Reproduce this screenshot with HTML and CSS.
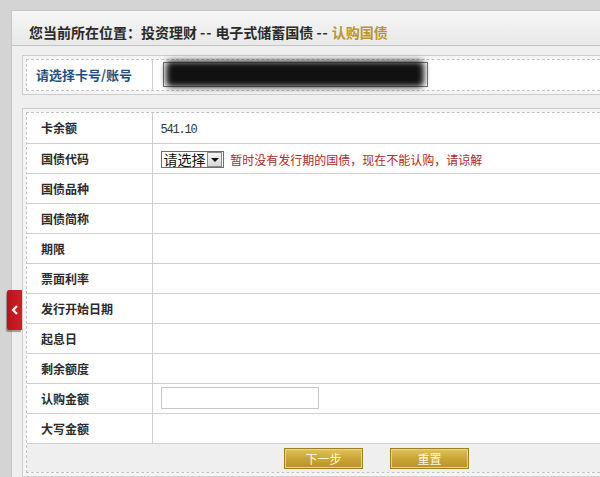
FILE: index.html
```html
<!DOCTYPE html>
<html lang="zh-CN">
<head>
    <meta charset="UTF-8">
    <title>认购国债</title>
    <link rel="stylesheet" href="styles.css">
</head>
<body>
    <div class="page">
        <div class="panel">
            <div class="crumb">
                您当前所在位置：<span class="crumb-item">投资理财</span><span class="sep">--</span>电子式储蓄国债<span class="sep">--</span><span class="current">认购国债</span>
            </div>

            <div class="content">
                <!-- card select -->
                <div class="box">
                    <div class="box-inner card-row">
                        <div class="card-label">请选择卡号/账号</div>
                        <div class="card-value">
                            <div class="account-select">
                                <div class="mask"></div>
                            </div>
                        </div>
                    </div>
                </div>

                <!-- bond form -->
                <div class="box form-box">
                    <div class="box-inner">
                        <table class="form-table">
                            <tr><td class="label">卡余额</td><td class="value"><span class="amount">541.10</span></td></tr>
                            <tr>
                                <td class="label">国债代码</td>
                                <td class="value">
                                    <span class="fake-select"><span class="fake-text">请选择</span><span class="fake-arrow"></span></span>
                                    <span class="notice">暂时没有发行期的国债，现在不能认购，请谅解</span>
                                </td>
                            </tr>
                            <tr><td class="label">国债品种</td><td class="value"></td></tr>
                            <tr><td class="label">国债简称</td><td class="value"></td></tr>
                            <tr><td class="label">期限</td><td class="value"></td></tr>
                            <tr><td class="label">票面利率</td><td class="value"></td></tr>
                            <tr><td class="label">发行开始日期</td><td class="value"></td></tr>
                            <tr><td class="label">起息日</td><td class="value"></td></tr>
                            <tr><td class="label">剩余额度</td><td class="value"></td></tr>
                            <tr><td class="label">认购金额</td><td class="value"><input type="text" class="amount-input"></td></tr>
                            <tr><td class="label">大写金额</td><td class="value"></td></tr>
                        </table>
                        <div class="button-bar">
                            <button class="btn">下一步</button>
                            <button class="btn">重置</button>
                        </div>
                    </div>
                </div>
            </div>
        </div>

        <!-- side toggle tab -->
        <div class="side-tab">
            <svg width="8" height="10" viewBox="0 0 8 10"><path d="M6 1 L2 5 L6 9" fill="none" stroke="#fff" stroke-width="2.2"/></svg>
        </div>
    </div>
</body>
</html>
```

FILE: styles.css
```css
* {
    margin: 0;
    padding: 0;
    box-sizing: border-box;
}

body {
    font-family: "Noto Sans CJK SC", "Liberation Sans", sans-serif;
    background-color: #d4d4d4;
    color: #333;
    overflow: hidden;
}

.page {
    position: relative;
    width: 680px;
    padding: 10px 0 0 11px;
}

.panel {
    border: 1px solid #c6c6c6;
    background-color: #efefef;
    height: 480px;
}

.crumb {
    height: 35px;
    padding: 9px 0 0 17px;
    font-size: 14px;
    font-weight: bold;
    line-height: 24px;
    color: #2a2a2a;
    background: linear-gradient(#f6f6f6, #e8e8e8);
    border-bottom: 1px solid #c4c4c4;
}

.sep {
    margin: 0 3px;
    letter-spacing: 1px;
}

.current {
    color: #b8952c;
}

.content {
    padding: 9px 0 0 10px;
}

.box {
    border: 1px solid #cdcdcd;
    padding: 3px;
    background-color: #f5f5f5;
}

.box-inner {
    border: 1px dashed #c2c2c2;
    background-color: #fff;
}

.card-row {
    display: flex;
    height: 32px;
}

.card-label {
    width: 126px;
    padding-left: 9px;
    border-right: 1px solid #cfcfcf;
    font-size: 13px;
    font-weight: bold;
    color: #24507e;
    line-height: 30px;
}

.card-value {
    padding: 2px 0 0 10px;
}

.account-select {
    position: relative;
    width: 265px;
    height: 25px;
    border: 1px solid #777;
    background-color: #fff;
}

.mask {
    position: absolute;
    top: -2px;
    left: 2px;
    right: 3px;
    bottom: -1px;
    background-color: #111;
    border-radius: 5px;
    filter: blur(3px);
}

.form-box {
    margin-top: 13px;
}

.form-table {
    width: 100%;
    border-collapse: collapse;
}

.form-table td {
    height: 30px;
    border-bottom: 1px solid #cfcfcf;
    font-size: 12px;
}

.form-table .label {
    width: 125px;
    padding-left: 14px;
    border-right: 1px solid #cfcfcf;
    font-weight: bold;
    color: #2b2b2b;
}

.form-table .value {
    padding-left: 8px;
}

.amount {
    font-family: "Liberation Mono", monospace;
    font-size: 12px;
    letter-spacing: -1.2px;
}

.fake-select {
    display: inline-flex;
    align-items: center;
    height: 17px;
    border: 1px solid #6d6d6d;
    vertical-align: middle;
}

.fake-text {
    font-size: 14px;
    line-height: 15px;
    padding: 0 1px 0 2px;
    color: #111;
}

.fake-arrow {
    position: relative;
    width: 15px;
    height: 15px;
    margin-right: 1px;
    border: 1px solid #8a8a8a;
    background: linear-gradient(#f4f4f4, #d8d8d8);
}

.fake-arrow::after {
    content: "";
    position: absolute;
    left: 3px;
    top: 5px;
    border-left: 4px solid transparent;
    border-right: 4px solid transparent;
    border-top: 4px solid #111;
}

.notice {
    margin-left: 4px;
    font-size: 12px;
    color: #b3262b;
    vertical-align: middle;
}

.amount-input {
    width: 158px;
    height: 22px;
    border: 1px solid #c6c6c6;
    vertical-align: middle;
}

.button-bar {
    display: flex;
    gap: 27px;
    height: 28px;
    padding: 4px 0 0 257px;
    background-color: #efefef;
}

.btn {
    width: 79px;
    height: 21px;
    border: 1px solid #9c7f22;
    background: linear-gradient(#e2c45c, #c9a536 50%, #b8942a);
    color: #fff8dc;
    font-family: "Noto Sans CJK SC", sans-serif;
    font-size: 12px;
    box-shadow: inset 0 0 0 1px #ecd47e;
}

.side-tab {
    position: absolute;
    left: 7px;
    top: 290px;
    width: 15px;
    height: 40px;
    display: flex;
    align-items: center;
    justify-content: center;
    background: linear-gradient(90deg, #b8121a, #d0202a);
    border-radius: 2px 0 0 2px;
    box-shadow: -1px 2px 1px rgba(0, 0, 0, 0.35);
}
```
